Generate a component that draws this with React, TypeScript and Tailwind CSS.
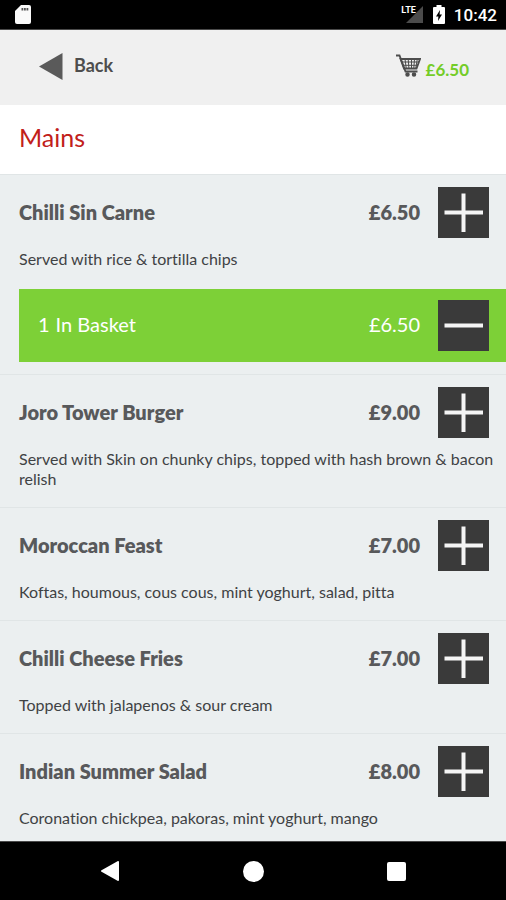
type MenuItem = {
  name: string;
  price: string;
  description: string;
  quantity?: number;
};

const mains: MenuItem[] = [
  { name: 'Chilli Sin Carne', price: '£6.50', description: 'Served with rice & tortilla chips', quantity: 1 },
  { name: 'Joro Tower Burger', price: '£9.00', description: 'Served with Skin on chunky chips, topped with hash brown & bacon relish' },
  { name: 'Moroccan Feast', price: '£7.00', description: 'Koftas, houmous, cous cous, mint yoghurt, salad, pitta' },
  { name: 'Chilli Cheese Fries', price: '£7.00', description: 'Topped with jalapenos & sour cream' },
  { name: 'Indian Summer Salad', price: '£8.00', description: 'Coronation chickpea, pakoras, mint yoghurt, mango' },
];

function StatusBar() {
  return (
    <div className="flex h-[30px] shrink-0 items-center justify-between border-b border-[#4a4a4a] bg-black pr-[9px] pl-[15px] font-[Roboto,sans-serif] text-white">
      <svg className="h-[19px] w-4" viewBox="0 0 16 19" aria-hidden="true">
        <path d="M6 0h8q2 0 2 2v15q0 2-2 2H2q-2 0-2-2V6z" fill="#fafafa" />
        <path d="M6.500 3h1.800v2.500H6.500zM9 3h1.800v2.500H9zM11.500 3h1.800v2.500h-1.800z" fill="#555" />
      </svg>
      <div className="flex items-center">
        <div className="flex items-center">
          <span className="-mr-2.5 self-start text-[9px] leading-[9px] font-bold">LTE</span>
          <svg className="h-[17px] w-[17px]" viewBox="0 0 17 17" aria-hidden="true">
            <path d="M17 0v17H0z" fill="#4b4b4b" />
          </svg>
        </div>
        <svg className="ml-2.5 h-[19px] w-3" viewBox="0 0 12 19" aria-hidden="true">
          <path d="M3.500 0h5v2H11q1 0 1 1v15q0 1-1 1H1q-1 0-1-1V3q0-1 1-1h2.500z" fill="#fff" />
          <path d="M7 5 3 11.500h2.400L5 16l4-6.500H6.600z" fill="#000" />
        </svg>
        <span className="ml-[9px] text-[17px] leading-5 font-medium">10:42</span>
      </div>
    </div>
  );
}

function CartIcon() {
  return (
    <svg className="h-6 w-[25px]" viewBox="0 0 25 24" fill="none" stroke="#4d4d4d" aria-hidden="true">
      <path d="M0 1.500h3.500L9.500 17.500h12" strokeWidth="1.800" />
      <path d="M4.500 5H24l-3.500 9.500H8z" strokeWidth="1.800" />
      <path d="M6 8h17M7 11.300h15M9 5l1.200 9M12.200 5l.7 9M15.500 5v9M18.500 5l-.7 9M21.300 5l-1.500 9" strokeWidth="1" />
      <circle cx="11.500" cy="20.500" r="1.500" fill="#4d4d4d" strokeWidth="1.500" />
      <circle cx="18" cy="20.500" r="1.500" fill="#4d4d4d" strokeWidth="1.500" />
    </svg>
  );
}

function StepButton({ kind, label }: { kind: 'plus' | 'minus'; label: string }) {
  return (
    <button type="button" aria-label={label} className="h-[51px] w-[51px] shrink-0 bg-[#3a3a3a]">
      <svg className="h-full w-full" viewBox="0 0 51 51" stroke="#f5f5f5" strokeWidth="4" aria-hidden="true">
        <path d="M6.500 25.500h38.500" />
        {kind === 'plus' && <path d="M25.500 6.500v38.500" />}
      </svg>
    </button>
  );
}

function MenuRow({ item }: { item: MenuItem }) {
  return (
    <li className="border-t border-[#e0e5e6] pt-3 pl-[19px]">
      <div className="flex items-center pr-[17px] text-xl leading-6 font-extrabold text-[#58595b]">
        <h2 className="flex-1 pb-0.5">{item.name}</h2>
        <span className="mr-[18px] pb-0.5">{item.price}</span>
        <StepButton kind="plus" label={`Add ${item.name}`} />
      </div>
      <p className="mt-[11px] pr-2 text-base leading-5 text-[#3f4244]">{item.description}</p>
      {item.quantity ? (
        <div className="mt-5 mb-3 flex h-[73px] items-center bg-[#7dd037] pr-[17px] pl-[19px] text-xl leading-6 text-white">
          <span className="flex-1 pb-1">
            <span className="mr-1.5">{item.quantity}</span>In Basket
          </span>
          <span className="mr-[18px] pb-1">{item.price}</span>
          <StepButton kind="minus" label={`Remove ${item.name}`} />
        </div>
      ) : (
        <div className="h-[18px]" />
      )}
    </li>
  );
}

function NavBar() {
  return (
    <nav className="flex h-[59px] shrink-0 items-center justify-center gap-[111px] border-t border-[#4a4a4a] bg-black">
      <button type="button" aria-label="Back" className="flex w-8 justify-center">
        <svg className="h-5 w-[18px]" viewBox="0 0 18 20" aria-hidden="true">
          <path d="M17 1v18L1 10z" fill="#fff" stroke="#fff" strokeWidth="2" strokeLinejoin="round" />
        </svg>
      </button>
      <button type="button" aria-label="Home" className="flex w-8 justify-center">
        <span className="h-[21px] w-[21px] rounded-full bg-white" />
      </button>
      <button type="button" aria-label="Recent apps" className="flex w-8 justify-center">
        <span className="h-[19px] w-[19px] rounded-xs bg-white" />
      </button>
    </nav>
  );
}

export default function App() {
  return (
    <div className="flex h-screen flex-col bg-[#ebeff0] font-[Lato,sans-serif] [font-variant-ligatures:none]">
      <StatusBar />
      <header className="flex h-[75px] shrink-0 items-center justify-between bg-[#f0f0f0] pr-[37px] pb-[3px] pl-[39px]">
        <button type="button" className="flex items-center gap-[11px] text-lg leading-6 font-bold text-[#4d4d4d]">
          <svg className="h-[27px] w-6" viewBox="0 0 24 27" aria-hidden="true">
            <path d="M23.500 0v27L0 13.500z" fill="#5a5a5a" />
          </svg>
          <span className="pb-0.5">Back</span>
        </button>
        <button type="button" aria-label="Basket £6.50" className="flex items-center gap-[5px] text-[17px] leading-6 font-bold text-[#74cc28]">
          <CartIcon />
          <span className="pt-2">£6.50</span>
        </button>
      </header>
      <h1 className="flex h-[69px] shrink-0 items-center bg-white px-[19px] pb-1 text-[25px] font-normal text-[#c1201a]">Mains</h1>
      <main className="min-h-0 flex-1 overflow-y-auto [scrollbar-width:none]">
        <ul>
          {mains.map((item) => (
            <MenuRow key={item.name} item={item} />
          ))}
        </ul>
      </main>
      <NavBar />
    </div>
  );
}
